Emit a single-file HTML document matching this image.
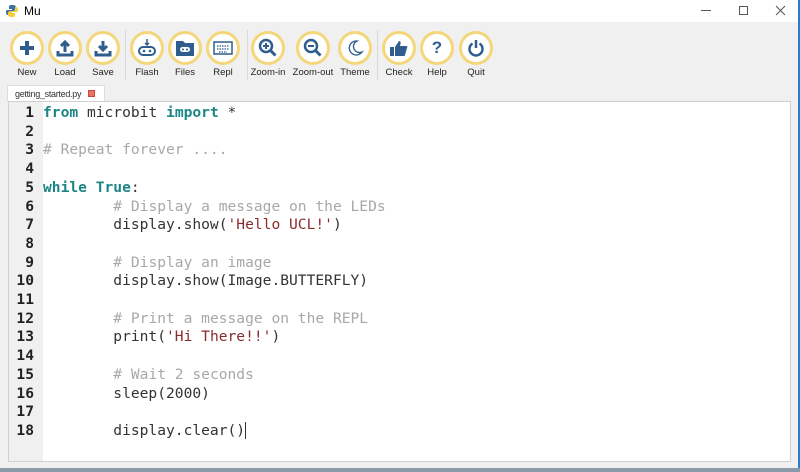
<!DOCTYPE html>
<html><head><meta charset="utf-8"><style>
*{margin:0;padding:0;box-sizing:border-box}
body{width:800px;height:472px;background:#f0f0f0;position:relative;overflow:hidden;font-family:"Liberation Sans",sans-serif}
.title{position:absolute;left:0;top:0;width:800px;height:22px;background:#fff}
.title span{position:absolute;left:24px;top:4px;font-size:12px;color:#000}
.wc{position:absolute;top:2px;font-size:14px;color:#333}
.btn{position:absolute;top:31px;width:34px;height:34px;border-radius:50%;border:3px solid #f3d77a;background:#fff;display:flex;align-items:center;justify-content:center}
.lbl{position:absolute;top:67px;font-size:9.5px;color:#222;width:60px;text-align:center}
.sep{position:absolute;top:30px;width:1px;height:50px;background:#d8d8d8}
.tab{position:absolute;left:7px;top:85px;width:98px;height:17px;background:#fff;border:1px solid #ddd;border-bottom:none;font-size:9px;letter-spacing:-0.3px;color:#333;padding:3px 0 0 7px}
.tab i{position:absolute;left:80px;top:4px;width:7px;height:7px;background:#e8765a;border:1px solid #c44}
.ed{position:absolute;left:8px;top:101px;width:783px;height:361px;background:#fff;border:1px solid #d0d0d0}
.gut{position:absolute;left:0;top:0;width:34px;height:100%;background:#f0f0f0}
.code{position:absolute;left:0;top:2px;font-family:"DejaVu Sans Mono",monospace;font-size:14.6px;line-height:18.7px;color:#333;white-space:pre}
.n{display:inline-block;width:25px;text-align:right;font-weight:bold;color:#222;margin-right:9px}
.k{color:#1d8585;font-weight:bold}.c{color:#a8a8a8}.s{color:#8a2a2a}
svg{display:block}
</style></head><body>
<div class="title">
<svg style="position:absolute;left:5px;top:4px" width="14" height="14" viewBox="0 0 14 14"><path d="M7 1C4 1 4 2 4 3v2h3v1H2C1 6 1 8 1 9s1 2 2 2h1V9c0-1 1-2 2-2h3c1 0 2-1 2-2V3c0-1-1-2-4-2z" fill="#3a72a8"/><path d="M7 13c3 0 3-1 3-2V9H7V8h5c1 0 1-2 1-3s-1-2-2-2h-1v2c0 1-1 2-2 2H5c-1 0-2 1-2 2v2c0 1 1 2 4 2z" fill="#f5cf3c"/></svg>
<span>Mu</span>
<div style="position:absolute;left:701px;top:10px;width:10px;height:1px;background:#555"></div>
<div style="position:absolute;left:739px;top:6px;width:9px;height:9px;border:1px solid #555"></div>
<svg style="position:absolute;left:775px;top:5px" width="11" height="11"><path d="M1 1l9 9M10 1l-9 9" stroke="#555" stroke-width="1"/></svg>
</div>
<div style="position:absolute;right:0;top:0;width:2px;height:472px;background:#2b7bd0"></div>

<div class="btn" style="left:10px"><svg width="18" height="18"><path d="M9 2v14M2 9h14" stroke="#2f5e8e" stroke-width="4"/></svg></div>
<div class="btn" style="left:48px"><svg width="18" height="18"><path d="M9 13V4M5 7l4-4 4 4" stroke="#2f5e8e" stroke-width="3" fill="none"/><path d="M2 12v4h14v-4" stroke="#2f5e8e" stroke-width="3" fill="none"/></svg></div>
<div class="btn" style="left:86px"><svg width="18" height="18"><path d="M9 2v9M5 7l4 4 4-4" stroke="#2f5e8e" stroke-width="3" fill="none"/><path d="M2 12v4h14v-4" stroke="#2f5e8e" stroke-width="3" fill="none"/></svg></div>
<div class="sep" style="left:125px"></div>
<div class="btn" style="left:130px"><svg width="20" height="20"><path d="M10 1v6M8 5l2 2 2-2" stroke="#2f5e8e" stroke-width="1.5" fill="none"/><rect x="2" y="9" width="16" height="8" rx="4" stroke="#2f5e8e" stroke-width="2" fill="none"/><circle cx="7" cy="13" r="1.3" fill="#2f5e8e"/><circle cx="13" cy="13" r="1.3" fill="#2f5e8e"/></svg></div>
<div class="btn" style="left:168px"><svg width="20" height="18"><path d="M1 2h7l2 2h9v13H1z" fill="#2f5e8e"/><rect x="5" y="8" width="10" height="5" rx="2.5" fill="#fff"/><circle cx="8" cy="10.5" r="1" fill="#2f5e8e"/><circle cx="12" cy="10.5" r="1" fill="#2f5e8e"/></svg></div>
<div class="btn" style="left:206px"><svg width="20" height="14"><rect x="1" y="1" width="18" height="12" fill="none" stroke="#2f5e8e" stroke-width="1.5"/><path d="M4 5h12M4 8h12M6 11h8" stroke="#2f5e8e" stroke-width="1.3" stroke-dasharray="1.5 1"/></svg></div>
<div class="sep" style="left:247px"></div>
<div class="btn" style="left:251px"><svg width="20" height="20"><circle cx="8" cy="8" r="6" stroke="#2f5e8e" stroke-width="2.5" fill="none"/><path d="M12.5 12.5l5 5" stroke="#2f5e8e" stroke-width="3"/><path d="M8 5v6M5 8h6" stroke="#2f5e8e" stroke-width="2"/></svg></div>
<div class="btn" style="left:296px"><svg width="20" height="20"><circle cx="8" cy="8" r="6" stroke="#2f5e8e" stroke-width="2.5" fill="none"/><path d="M12.5 12.5l5 5" stroke="#2f5e8e" stroke-width="3"/><path d="M5 8h6" stroke="#2f5e8e" stroke-width="2"/></svg></div>
<div class="btn" style="left:338px"><svg width="18" height="18"><path d="M11 2a7 7 0 1 0 5 11A6 6 0 0 1 11 2z" stroke="#2f5e8e" stroke-width="1.3" fill="none"/></svg></div>
<div class="sep" style="left:377px"></div>
<div class="btn" style="left:382px"><svg width="20" height="18"><rect x="1" y="8" width="4" height="9" fill="#2f5e8e"/><path d="M6 8l4-6c2 0 2 2 1 5h6c1 0 2 1 1 2l-2 7c0 1-1 1-2 1H6z" fill="#2f5e8e"/></svg></div>
<div class="btn" style="left:420px"><span style="font-weight:bold;color:#2f5e8e;font-size:17px">?</span></div>
<div class="btn" style="left:459px"><svg width="18" height="18"><path d="M5.5 4.5a6.5 6.5 0 1 0 7 0" stroke="#2f5e8e" stroke-width="2.5" fill="none"/><path d="M9 1v8" stroke="#2f5e8e" stroke-width="2.5"/></svg></div>

<div class="lbl" style="left:-3px">New</div>
<div class="lbl" style="left:35px">Load</div>
<div class="lbl" style="left:73px">Save</div>
<div class="lbl" style="left:117px">Flash</div>
<div class="lbl" style="left:155px">Files</div>
<div class="lbl" style="left:193px">Repl</div>
<div class="lbl" style="left:238px">Zoom-in</div>
<div class="lbl" style="left:283px">Zoom-out</div>
<div class="lbl" style="left:325px">Theme</div>
<div class="lbl" style="left:369px">Check</div>
<div class="lbl" style="left:407px">Help</div>
<div class="lbl" style="left:446px">Quit</div>

<div class="tab">getting_started.py<i></i></div>
<div class="ed"><div class="gut"></div>
<div class="code"><span class="n">1</span><span class="k">from</span> microbit <span class="k">import</span> *
<span class="n">2</span>
<span class="n">3</span><span class="c"># Repeat forever ....</span>
<span class="n">4</span>
<span class="n">5</span><span class="k">while</span> <span class="k">True</span>:
<span class="n">6</span>        <span class="c"># Display a message on the LEDs</span>
<span class="n">7</span>        display.show(<span class="s">'Hello UCL!'</span>)
<span class="n">8</span>
<span class="n">9</span>        <span class="c"># Display an image</span>
<span class="n">10</span>        display.show(Image.BUTTERFLY)
<span class="n">11</span>
<span class="n">12</span>        <span class="c"># Print a message on the REPL</span>
<span class="n">13</span>        print(<span class="s">'Hi There!!'</span>)
<span class="n">14</span>
<span class="n">15</span>        <span class="c"># Wait 2 seconds</span>
<span class="n">16</span>        sleep(2000)
<span class="n">17</span>
<span class="n">18</span>        display.clear()<span style="border-left:1px solid #333"></span></div>
</div>
<div style="position:absolute;left:0;top:468px;width:800px;height:4px;background:#8a9aa8"></div>
</body></html>
